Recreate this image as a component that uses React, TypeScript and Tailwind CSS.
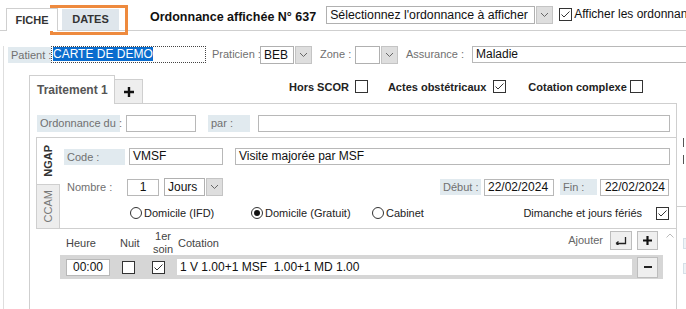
import React from 'react'

function Check({ on = false, className = '' }: { on?: boolean; className?: string }) {
  return (
    <div className={`flex h-[13px] w-[13px] flex-none items-center justify-center border border-[#333] bg-white ${className}`}>
      {on && (
        <svg width="11" height="11" viewBox="0 0 11 11">
          <polyline points="1.5,5.5 4,8 9.5,2.5" fill="none" stroke="#333" strokeWidth="1" />
        </svg>
      )}
    </div>
  )
}

function Radio({ on = false }: { on?: boolean }) {
  return (
    <div className="flex h-[12px] w-[12px] flex-none items-center justify-center rounded-full border border-[#333] bg-white">
      {on && <div className="h-[6px] w-[6px] rounded-full bg-[#111]" />}
    </div>
  )
}

function Lbl({ children, className = '' }: { children: React.ReactNode; className?: string }) {
  return (
    <div className={`h-[16px] flex-none bg-[#e1eaef] px-[3px] text-[11px] leading-[16px] whitespace-nowrap text-[#707070] ${className}`}>
      {children}
    </div>
  )
}

function Field({ children, className = '' }: { children?: React.ReactNode; className?: string }) {
  return (
    <div className={`h-[17px] flex-none border border-[#b8b8b8] bg-white px-[3px] text-[12px] leading-[15px] whitespace-nowrap text-[#111] ${className}`}>
      {children}
    </div>
  )
}

function Chevron() {
  return (
    <svg width="9" height="6" viewBox="0 0 9 6">
      <polyline points="1,1 4.5,4.5 8,1" fill="none" stroke="#666" strokeWidth="1" />
    </svg>
  )
}

function Select({ text, className = '', textClass = 'text-[12px]' }: { text: string; className?: string; textClass?: string }) {
  return (
    <div className={`flex h-[18px] flex-none ${className}`}>
      <div className={`flex-1 overflow-hidden border border-[#b0b0b0] bg-white px-[3px] leading-[16px] whitespace-nowrap text-[#111] ${textClass}`}>{text}</div>
      <div className="ml-[1px] flex w-[17px] flex-none items-center justify-center border border-[#c4c4c4] bg-[#dedede]">
        <Chevron />
      </div>
    </div>
  )
}

export default function App() {
  return (
    <div className="relative h-[309px] w-[686px] overflow-hidden bg-white font-['Liberation_Sans',Arial,sans-serif] text-[#222]">
      {/* barre d'onglets du haut */}
      <div className="flex h-[31px] border-b border-[#cfcfcf]">
        <div className="relative z-10 ml-[6px] mt-[8px] flex h-[23px] w-[52px] flex-none items-center justify-center border border-b-0 border-[#cfcfcf] bg-white text-[11px] font-bold text-[#333]">
          FICHE
        </div>
        <div className="ml-[4px] mt-[9px] flex h-[21px] w-[57px] flex-none items-center justify-center bg-[#dfe6ec] text-[11px] font-bold text-[#333]">
          DATES
        </div>
        <div className="ml-[31px] mt-[9px] flex-none whitespace-nowrap text-[12.5px] leading-[16px] font-bold text-[#111]">
          Ordonnance affichée N° 637
        </div>
        <Select text="Sélectionnez l'ordonnance à afficher" textClass="text-[12.3px]" className="ml-[10px] mt-[6px] w-[227px]" />
        <Check on className="ml-[6px] mt-[8px]" />
        <div className="ml-[2px] mt-[7px] min-w-0 flex-1 overflow-hidden text-[12px] leading-[15px] whitespace-nowrap text-[#111]">Afficher les ordonnances</div>
      </div>
      <div className="absolute left-[50px] top-[5px] h-[30px] w-[78px] border-[3px] border-[#ee8a3e]" />

      <div className="ml-[3px] h-[278px] border-l border-[#dedede]">
        {/* patient */}
        <div className="mt-[15px] flex h-[17px] items-center">
          <Lbl className="ml-[4px] w-[43px]">Patient :</Lbl>
          <div className="h-[17px] w-[155px] flex-none border border-dotted border-[#444] px-[1px] text-[12px] leading-[15px]">
            <span className="bg-[#0a6cce] text-white">CARTE DE DEMO</span>
          </div>
          <div className="ml-[6px] w-[48px] flex-none text-[11px] whitespace-nowrap text-[#707070]">Praticien :</div>
          <Select text="BEB" className="w-[52px]" />
          <div className="ml-[8px] w-[35px] flex-none text-[11px] whitespace-nowrap text-[#707070]">Zone :</div>
          <Select text="" className="w-[43px]" />
          <div className="ml-[8px] w-[66px] flex-none text-[11px] whitespace-nowrap text-[#707070]">Assurance :</div>
          <Field className="w-[230px]">Maladie</Field>
        </div>

        {/* traitement */}
        <div className="ml-[25px] mt-[12px] flex">
          <div className="w-[648px] flex-none">
            <div className="flex h-[28px] items-end">
              <div className="relative z-10 -mb-px flex h-[29px] w-[86px] flex-none items-center border border-b-0 border-[#cfcfcf] bg-white pl-[7px] text-[12px] font-bold text-[#555]">
                Traitement 1
              </div>
              <div className="flex h-[24px] w-[28px] flex-none items-center justify-center border-t border-r border-[#cfcfcf] bg-[#eeeeee]">
                <svg width="10" height="10" viewBox="0 0 10 10">
                  <path d="M3.8 0h2.4v3.8H10v2.4H6.2V10H3.8V6.2H0V3.8h3.8z" fill="#111" />
                </svg>
              </div>
              <div className="mb-[8px] ml-[146px] flex items-center text-[11px] font-bold text-[#222]">
                <span>Hors SCOR</span>
                <Check className="ml-[6px]" />
                <span className="ml-[20px]">Actes obstétricaux</span>
                <Check on className="ml-[7px]" />
                <span className="ml-[22px]">Cotation complexe</span>
                <Check className="ml-[3px]" />
              </div>
            </div>
            <div className="h-[207px] border-x border-t border-[#cfcfcf]">
              <div className="ml-[7px] mt-[11px] flex items-center">
                <Lbl className="h-[17px] w-[83px] leading-[17px]">Ordonnance du :</Lbl>
                <Field className="ml-[6px] w-[70px]" />
                <Lbl className="ml-[12px] h-[17px] w-[42px] leading-[17px]">par :</Lbl>
                <Field className="ml-[8px] w-[412px]" />
              </div>

              {/* ngap */}
              <div className="ml-[6px] mt-[5px] flex h-[180px] border-t border-[#cfcfcf]">
                <div className="w-[24px] flex-none">
                  <div className="flex h-[46px] items-center justify-center border-l border-[#cfcfcf] bg-white">
                    <span className="rotate-180 text-[11px] font-bold text-[#333] [writing-mode:vertical-rl]">NGAP</span>
                  </div>
                  <div className="flex h-[45px] items-center justify-center border border-[#cfcfcf] bg-[#ededed]">
                    <span className="rotate-180 text-[11px] text-[#777] [writing-mode:vertical-rl]">CCAM</span>
                  </div>
                </div>
                <div className="flex-1">
                  <div className="mt-[10px] flex items-center">
                    <Lbl className="ml-[4px] w-[61px]">Code :</Lbl>
                    <Field className="ml-[4px] w-[94px]">VMSF</Field>
                    <Field className="ml-[12px] w-[435px]">Visite majorée par MSF</Field>
                  </div>
                  <div className="mt-[13px] flex items-center">
                    <div className="ml-[7px] w-[60px] flex-none text-[11px] text-[#707070]">Nombre :</div>
                    <Field className="w-[32px] text-center">1</Field>
                    <Select text="Jours" className="ml-[5px] w-[59px]" />
                    <Lbl className="ml-[217px] w-[41px]">Début :</Lbl>
                    <Field className="ml-[3px] w-[70px]">22/02/2024</Field>
                    <Lbl className="ml-[6px] w-[37px]">Fin :</Lbl>
                    <Field className="ml-[3px] w-[69px] text-right">22/02/2024</Field>
                  </div>
                  <div className="mt-[9px] flex h-[16px] items-center text-[11px] text-[#222]">
                    <div className="ml-[70px] flex w-[121px] flex-none items-center gap-[2px]">
                      <Radio />
                      <span>Domicile (IFD)</span>
                    </div>
                    <div className="flex w-[121px] flex-none items-center gap-[2px]">
                      <Radio on />
                      <span>Domicile (Gratuit)</span>
                    </div>
                    <div className="flex flex-none items-center gap-[2px]">
                      <Radio />
                      <span>Cabinet</span>
                    </div>
                    <span className="ml-auto">Dimanche et jours fériés</span>
                    <Check on className="ml-[14px] mr-[7px]" />
                  </div>

                  {/* lignes de cotation */}
                  <div className="mt-[7px] flex border-t border-[#cfcfcf]">
                    <div className="flex-1">
                      <div className="flex h-[26px] text-[11px] text-[#444]">
                        <div className="ml-[6px] mt-[6px] w-[54px] flex-none">Heure</div>
                        <div className="mt-[6px] w-[28px] flex-none">Nuit</div>
                        <div className="w-[30px] flex-none pt-[1px] text-center leading-[13px]">
                          1er
                          <br />
                          soin
                        </div>
                        <div className="mt-[6px] flex-none">Cotation</div>
                        <div className="ml-auto mt-[3px] flex-none text-[#666]">Ajouter</div>
                        <div className="ml-[7px] mt-[2px] flex h-[19px] w-[22px] flex-none items-center justify-center border border-[#bdbdbd] bg-[#efefef]">
                          <svg width="12" height="8" viewBox="0 0 12 8">
                            <path d="M10.5 0v6.5H1M1 6.5l2.5-2M1 6.5l2.5 1.5" fill="none" stroke="#222" strokeWidth="1.3" />
                          </svg>
                        </div>
                        <div className="ml-[5px] mr-[5px] mt-[2px] flex h-[19px] w-[21px] flex-none items-center justify-center border border-[#bdbdbd] bg-[#efefef]">
                          <svg width="9" height="9" viewBox="0 0 10 10">
                            <path d="M3.8 0h2.4v3.8H10v2.4H6.2V10H3.8V6.2H0V3.8h3.8z" fill="#111" />
                          </svg>
                        </div>
                      </div>
                      <div className="flex h-[24px] items-center bg-[#d6d6d6]">
                        <Field className="ml-[6px] h-[16px] w-[44px] text-center leading-[14px]">00:00</Field>
                        <Check className="ml-[12px]" />
                        <Check on className="ml-[17px]" />
                        <div className="ml-[12px] h-[16px] flex-1 bg-white px-[3px] text-[12px] leading-[16px] whitespace-pre text-[#111]">
                          {'1 V 1.00+1 MSF  1.00+1 MD 1.00'}
                        </div>
                        <div className="ml-[5px] mr-[5px] flex h-[21px] w-[21px] flex-none items-center justify-center border border-[#bdbdbd] bg-[#efefef]">
                          <div className="h-[2px] w-[8px] bg-[#222]" />
                        </div>
                      </div>
                    </div>
                    <div className="w-[13px] flex-none pt-[4px] pl-[3px]">
                      <svg width="8" height="5" viewBox="0 0 8 5">
                        <polyline points="0.5,4.5 4,1 7.5,4.5" fill="none" stroke="#bbb" strokeWidth="1" />
                      </svg>
                    </div>
                  </div>
                </div>
              </div>
            </div>
          </div>

          {/* panneau voisin coupé */}
          <div className="mt-[28px] flex w-[20px] flex-none flex-col">
            <div className="ml-[6px] mt-[35px] h-[9px] w-[1px] bg-[#555]" />
            <div className="ml-[6px] mt-[8px] h-[9px] w-[1px] bg-[#555]" />
            <div className="mt-[42px] h-px w-full bg-[#cfcfcf]" />
            <div className="ml-[6px] mt-[31px] h-[11px] w-[10px] border border-[#d5e0e8] bg-[#eef3f6]" />
            <div className="ml-[6px] mt-[14px] h-[11px] w-[10px] border border-[#d5e0e8] bg-[#eef3f6]" />
          </div>
        </div>
      </div>
    </div>
  )
}
